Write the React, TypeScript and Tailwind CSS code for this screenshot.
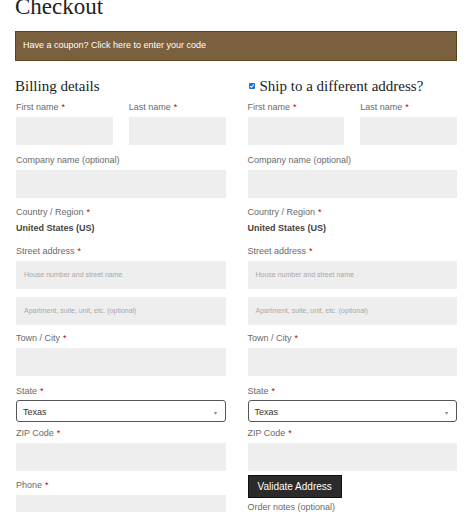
import React from "react"

const sans = { fontFamily: '"Liberation Sans", Arial, sans-serif' }
const serif = { fontFamily: '"Liberation Serif", "Times New Roman", serif' }

function Label({ text, required = true, className = "mb-[3px]" }: { text: string; required?: boolean; className?: string }) {
  return (
    <div className={`text-[9px] leading-[13px] text-[#6a6a6a] ${className}`}>
      {text}
      {required && <span className="text-[#c00000] ml-[3px]">*</span>}
    </div>
  )
}

function Input({ placeholder, className = "" }: { placeholder?: string; className?: string }) {
  return (
    <div className={`h-[28px] bg-[#eeeeee] flex items-center px-[8px] text-[7px] text-[#a8a8a8] ${className}`}>
      {placeholder}
    </div>
  )
}

function Select() {
  return (
    <div className="h-[22px] border border-[#555] rounded-[3px] flex items-center justify-between pl-[6px] pr-[8px] mb-[5px]">
      <span className="text-[9px] text-[#333] mt-[4px]">Texas</span>
      <span className="text-[6px] text-[#888] mt-[5px]">▾</span>
    </div>
  )
}

function AddressFields({ billing }: { billing: boolean }) {
  return (
    <div className="pl-px">
      <div className="grid grid-cols-2 gap-4">
        <div>
          <Label text="First name" />
          <Input className="mb-[9px]" />
        </div>
        <div>
          <Label text="Last name" />
          <Input className="mb-[9px]" />
        </div>
      </div>
      <Label text="Company name (optional)" required={false} />
      <Input className="mb-[8px]" />
      <Label text="Country / Region" />
      <div className="text-[9px] leading-[13px] font-bold text-[#444] mt-[2px] mb-[10px]">United States (US)</div>
      <Label text="Street address" />
      <Input placeholder="House number and street name" className="mb-[8px]" />
      <Input placeholder="Apartment, suite, unit, etc. (optional)" className="mb-[7px]" />
      <Label text="Town / City" />
      <Input className="mb-[9px]" />
      <Label text="State" className="mb-[2px]" />
      <Select />
      <Label text="ZIP Code" />
      {billing ? (
        <>
          <Input className="mb-[8px]" />
          <Label text="Phone" />
          <Input />
        </>
      ) : (
        <>
          <Input className="mb-[2px]" />
          <button className="h-[23px] px-[9px] bg-[#2b2b2b] border border-[#111] text-white text-[10px] mb-[3px]">
            Validate Address
          </button>
          <Label text="Order notes (optional)" required={false} />
        </>
      )}
    </div>
  )
}

export default function App() {
  return (
    <main className="w-[468px] h-[512px] overflow-hidden bg-white pl-[15px] pr-[11px]" style={sans}>
      <h1 className="text-[23px] leading-[23px] text-[#222] -mt-[5px]" style={serif}>
        Checkout
      </h1>

      {/* coupon notice */}
      <div className="mt-[13px] h-[30px] bg-[#7a603f] border border-[#5b4312] flex items-center pl-[7px] text-[9px] text-white">
        Have a coupon? Click here to enter your code
      </div>

      <div className="grid grid-cols-2 gap-[21px] mt-[15px]">
        <section>
          <h3 className="text-[15px] leading-[20px] text-[#222] mb-[5px]" style={serif}>
            Billing details
          </h3>
          <AddressFields billing />
        </section>
        <section>
          <div className="flex items-center gap-[5px] mb-[5px] pl-[2px]">
            <span className="w-[6px] h-[6px] rounded-[1px] bg-[#1a6fd6] flex items-center justify-center">
              <svg viewBox="0 0 8 8" className="w-[6px] h-[6px]">
                <path d="M1.5 4.2 L3.2 5.8 L6.5 2.2" stroke="white" strokeWidth="1.4" fill="none" />
              </svg>
            </span>
            <h3 className="text-[15px] leading-[20px] text-[#222]" style={serif}>
              Ship to a different address?
            </h3>
          </div>
          <AddressFields billing={false} />
        </section>
      </div>
    </main>
  )
}
